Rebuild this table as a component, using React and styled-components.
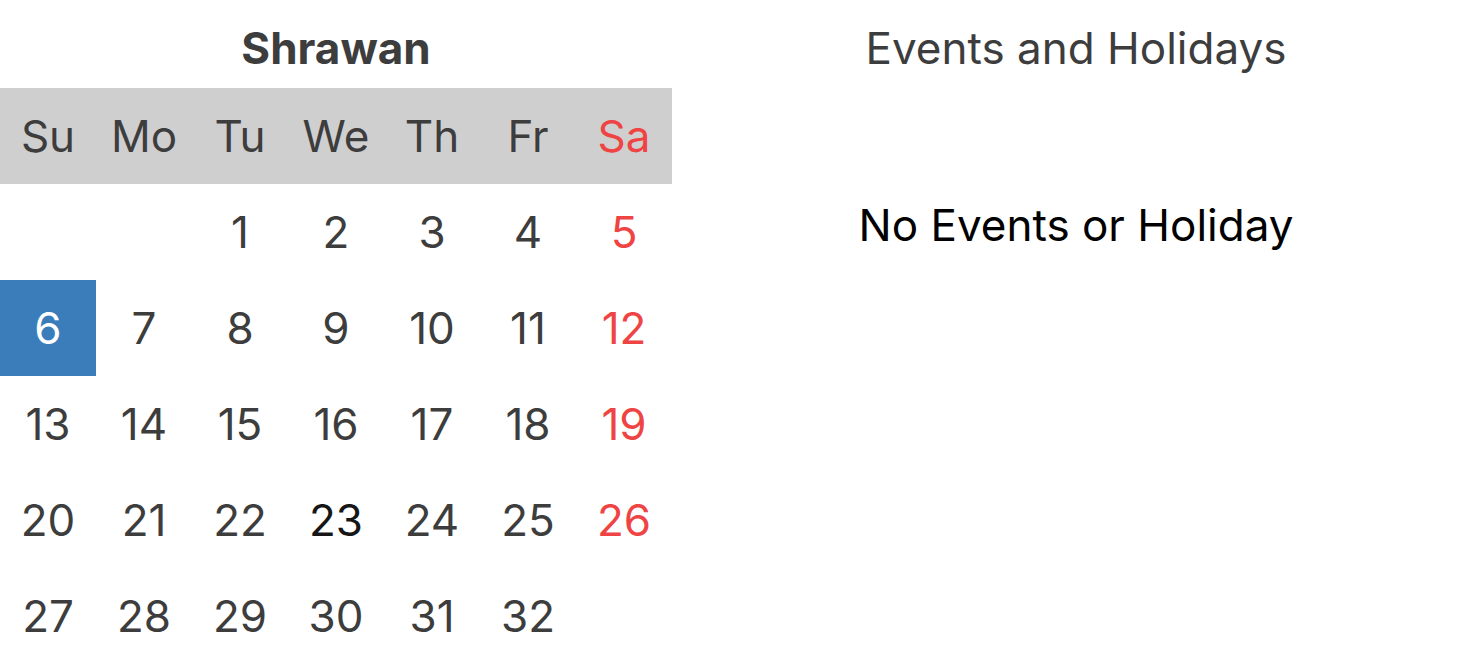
import styled, { createGlobalStyle } from "styled-components";

const GlobalStyle = createGlobalStyle`
  body {
    margin: 0;
    font-family: Inter, "Noto Sans", sans-serif;
    background: #fff;
  }
`;

const weekdays = ["Su", "Mo", "Tu", "We", "Th", "Fr", "Sa"];
const days = [null, null, ...Array.from({ length: 32 }, (_, i) => i + 1)];
const selected = 6;
const today = 23;

const App = () => {
  return (
    <Page>
      <GlobalStyle />
      <Calendar>
        <MonthTitle>Shrawan</MonthTitle>
        <WeekRow>
          {weekdays.map((d, i) => (
            <WeekDay key={d} holiday={i === 6}>
              {d}
            </WeekDay>
          ))}
        </WeekRow>
        <DayGrid>
          {days.map((d, i) => (
            <Day
              key={i}
              holiday={i % 7 === 6}
              selected={d === selected}
              today={d === today}
            >
              {d}
            </Day>
          ))}
        </DayGrid>
      </Calendar>
      <Events>
        <EventsTitle>Events and Holidays</EventsTitle>
        <Empty>No Events or Holiday</Empty>
      </Events>
    </Page>
  );
};

const Page = styled.div`
  display: flex;
  width: 1460px;
  height: 664px;
  overflow: hidden;
`;
const Calendar = styled.div`
  width: 672px;
  flex-shrink: 0;
`;
const MonthTitle = styled.div`
  height: 88px;
  padding-top: 8px;
  box-sizing: border-box;
  display: flex;
  align-items: center;
  justify-content: center;
  font-size: 44px;
  font-weight: 700;
  color: #3d3d3d;
`;
const WeekRow = styled.div`
  display: grid;
  grid-template-columns: repeat(7, 96px);
  background: #d0cfd0;
`;
const WeekDay = styled.div`
  height: 96px;
  display: flex;
  align-items: center;
  justify-content: center;
  font-size: 44px;
  color: ${({ holiday }) => (holiday ? "#ef4444" : "#3d3d3d")};
`;
const DayGrid = styled.div`
  display: grid;
  grid-template-columns: repeat(7, 96px);
  grid-auto-rows: 96px;
`;
const Day = styled.div`
  display: flex;
  align-items: center;
  justify-content: center;
  font-size: 44px;
  background: ${({ selected }) => (selected ? "#3b7dbb" : "transparent")};
  color: ${({ selected, holiday, today }) =>
    selected ? "#fff" : holiday ? "#ef4444" : today ? "#161616" : "#3d3d3d"};
`;
const Events = styled.div`
  flex: 1;
  padding-left: 20px;
  display: flex;
  flex-direction: column;
  align-items: center;
`;
const EventsTitle = styled.div`
  height: 96px;
  display: flex;
  align-items: center;
  font-size: 44px;
  color: #3d3d3d;
`;
const Empty = styled.div`
  margin-top: 102px;
  font-size: 44px;
  color: #000;
`;

export default App;
